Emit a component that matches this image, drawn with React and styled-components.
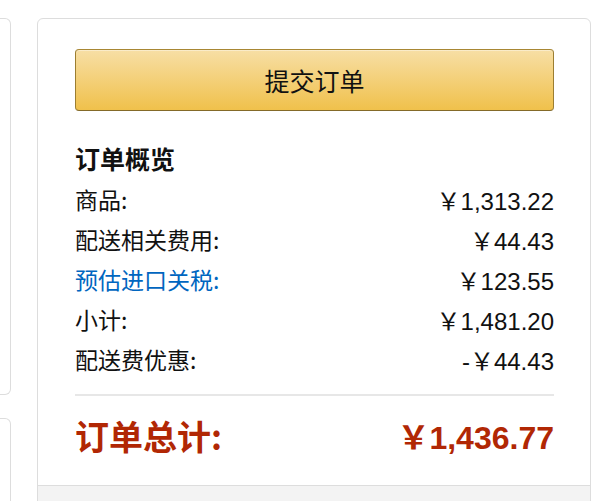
import React from "react";
import styled, { createGlobalStyle } from "styled-components";

const GlobalStyle = createGlobalStyle`
    html, body {
        margin: 0;
        padding: 0;
        background: #fff;
        height: 100%;
        overflow: hidden;
    }

    body {
        font-family: "Liberation Sans", Arial, "Noto Sans CJK SC", sans-serif;
        color: #111;
    }
`;

const StyledPageDiv = styled.div`
    display: flex;
    align-items: flex-start;
    gap: 26px;
    padding-top: 18px;
    width: 600px;
    height: 501px;
    box-sizing: border-box;
    overflow: hidden;
`;

const StyledSideColumn = styled.div`
    display: flex;
    flex-direction: column;
    gap: 23px;
    width: 11px;
    flex-shrink: 0;
`;

const StyledSideCard = styled.div`
    height: ${(props) => props.height}px;
    border: 1px solid #dddddd;
    border-left: none;
    border-radius: 0 6px 6px 0;
    box-sizing: border-box;
`;

const StyledSummaryCard = styled.div`
    width: 554px;
    border: 1px solid #dddddd;
    border-radius: 6px;
    box-sizing: border-box;
    overflow: hidden;
`;

const StyledSummaryBody = styled.div`
    padding: 30px 36px 11px 37px;
`;

const StyledPlaceOrderButton = styled.button`
    display: block;
    width: 100%;
    height: 62px;
    margin: 0;
    padding: 0;
    border: 1px solid;
    border-color: #a88734 #9c7e31 #846a29;
    border-radius: 4px;
    background: linear-gradient(to bottom, #f7dfa5, #f0c14b);
    box-shadow: inset 0 1px 0 rgba(255, 255, 255, 0.4);
    font-family: "Noto Sans CJK SC", sans-serif;
    font-size: 25px;
    color: #111;
    cursor: pointer;
`;

const StyledSummaryTitle = styled.h3`
    margin: 29px 0 3px;
    font-family: "Noto Sans CJK SC", sans-serif;
    font-size: 25px;
    font-weight: 700;
    line-height: 36px;
    color: #111;
`;

const StyledLineItem = styled.div`
    display: flex;
    justify-content: space-between;
    align-items: center;
    height: 40px;
    font-size: 23px;
`;

const StyledLineLabel = styled.span`
    font-family: "Noto Sans CJK SC", sans-serif;
    color: ${(props) => (props.link ? "#0066c0" : "#111")};
`;

const StyledAmount = styled.span`
    font-family: "Liberation Sans", Arial, "Noto Sans CJK SC", sans-serif;
    font-size: 24px;
    color: #111;
`;

const StyledDivider = styled.hr`
    margin: 15px 0 0;
    border: none;
    border-top: 2px solid #e7e7e7;
`;

const StyledTotalRow = styled.div`
    display: flex;
    justify-content: space-between;
    align-items: center;
    height: 78px;
    font-weight: 700;
    color: #b12704;
`;

const StyledTotalLabel = styled.span`
    font-family: "Noto Sans CJK SC", sans-serif;
    font-size: 34px;
`;

const StyledTotalAmount = styled.span`
    font-family: "Liberation Sans", Arial, "Noto Sans CJK SC", sans-serif;
    font-size: 32px;
`;

const StyledSummaryFooter = styled.div`
    height: 40px;
    border-top: 1px solid #dddddd;
    background: #f3f3f3;
`;

const lineItems = [
    { label: "商品:", amount: "￥1,313.22" },
    { label: "配送相关费用:", amount: "￥44.43" },
    { label: "预估进口关税:", amount: "￥123.55", link: true },
    { label: "小计:", amount: "￥1,481.20" },
    { label: "配送费优惠:", amount: "-￥44.43" },
];

const App = () => {
    return (
        <>
            <GlobalStyle />
            <StyledPageDiv>
                <StyledSideColumn>
                    <StyledSideCard height={377} />
                    <StyledSideCard height={120} />
                </StyledSideColumn>

                <StyledSummaryCard>
                    <StyledSummaryBody>
                        <StyledPlaceOrderButton>提交订单</StyledPlaceOrderButton>

                        <StyledSummaryTitle>订单概览</StyledSummaryTitle>
                        {lineItems.map((item) => (
                            <StyledLineItem key={item.label}>
                                <StyledLineLabel link={item.link}>
                                    {item.label}
                                </StyledLineLabel>
                                <StyledAmount>{item.amount}</StyledAmount>
                            </StyledLineItem>
                        ))}

                        <StyledDivider />
                        <StyledTotalRow>
                            <StyledTotalLabel>订单总计:</StyledTotalLabel>
                            <StyledTotalAmount>￥1,436.77</StyledTotalAmount>
                        </StyledTotalRow>
                    </StyledSummaryBody>
                    <StyledSummaryFooter />
                </StyledSummaryCard>
            </StyledPageDiv>
        </>
    );
};

export default App;
